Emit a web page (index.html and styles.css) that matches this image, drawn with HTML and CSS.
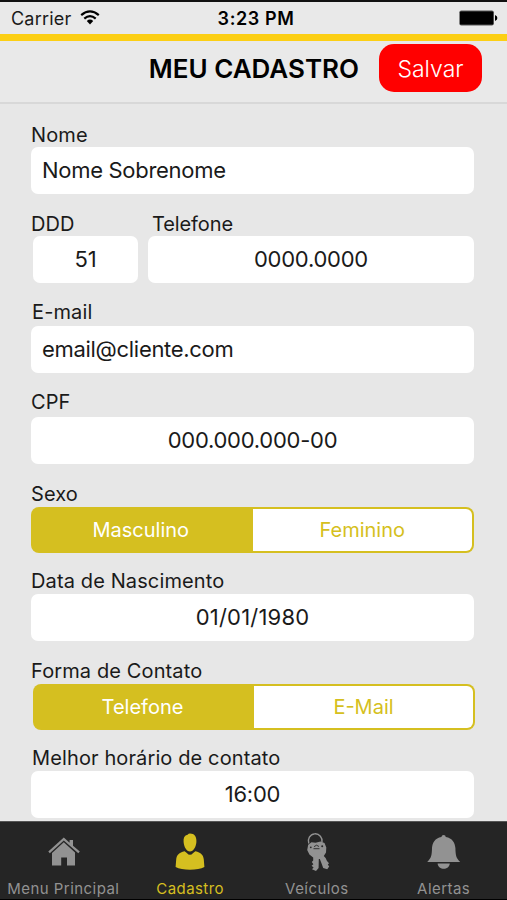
FILE: index.html
```
<!DOCTYPE html>
<html lang="pt-BR">
<head>
    <meta charset="UTF-8">
    <meta name="viewport" content="width=device-width, initial-scale=1.0">
    <title>Meu Cadastro</title>
    <link rel="stylesheet" href="styles.css">
</head>
<body>
    <div class="status-bar">
        <div class="carrier">
            <span>Carrier</span>
            <svg class="wifi" width="20" height="15" viewBox="0 0 20 15">
                <path d="M1.2 5.2 Q10 -2.4 18.8 5.2" fill="none" stroke="#000" stroke-width="2.2"/>
                <path d="M4.3 8.6 Q10 3.6 15.7 8.6" fill="none" stroke="#000" stroke-width="2.2"/>
                <path d="M6.8 11 Q10 8.2 13.2 11 L10 14.4 Z" fill="#000"/>
            </svg>
        </div>
        <div class="time">3:23 PM</div>
        <div class="battery">
            <svg width="39" height="16" viewBox="0 0 39 16">
                <rect x="0.3" y="0.6" width="34.6" height="14.8" rx="2" fill="#555"/>
                <rect x="1" y="1.4" width="33.2" height="13.2" rx="1.2" fill="#000"/>
                <path d="M36 5 Q38.4 6 38.4 8 Q38.4 10 36 11 Z" fill="#000"/>
            </svg>
        </div>
    </div>

    <header class="header">
        <h1 class="title">MEU CADASTRO</h1>
        <button class="save-btn">Salvar</button>
    </header>

    <main class="form">
        <div class="group">
            <label class="label">Nome</label>
            <div class="field text">Nome Sobrenome</div>
        </div>

        <div class="row">
            <div class="group ddd">
                <label class="label">DDD</label>
                <div class="field center">51</div>
            </div>
            <div class="group phone">
                <label class="label">Telefone</label>
                <div class="field center">0000.0000</div>
            </div>
        </div>

        <div class="group email">
            <label class="label">E-mail</label>
            <div class="field text">email@cliente.com</div>
        </div>

        <div class="group cpf">
            <label class="label">CPF</label>
            <div class="field center">000.000.000-00</div>
        </div>

        <div class="group gender">
            <label class="label">Sexo</label>
            <div class="segmented">
                <div class="segment active">Masculino</div>
                <div class="segment">Feminino</div>
            </div>
        </div>

        <div class="group birth">
            <label class="label">Data de Nascimento</label>
            <div class="field center date">01/01/1980</div>
        </div>

        <div class="group contact">
            <label class="label">Forma de Contato</label>
            <div class="segmented">
                <div class="segment active">Telefone</div>
                <div class="segment">E-Mail</div>
            </div>
        </div>

        <div class="group hour">
            <label class="label">Melhor horário de contato</label>
            <div class="field center">16:00</div>
        </div>
    </main>

    <nav class="tab-bar">
        <div class="tab">
            <svg class="tab-icon" width="40" height="40" viewBox="0 0 40 40" fill="#929292">
                <path d="M5.3 17.6 L20.8 3.4 L26.6 8.7 V6 H30 V11.8 L36.8 17.6 L35.3 19.2 L20.8 6.6 L6.8 19.2 Z"/>
                <path d="M9 19 L20.8 8.2 L32 18.6 V31.5 H24 V23.6 H18.2 V31.5 H9 Z"/>
            </svg>
            <span>Menu Principal</span>
        </div>
        <div class="tab selected">
            <svg class="tab-icon" width="40" height="40" viewBox="0 0 40 40" fill="#d5bf20">
                <path d="M20 -0.4 C24.5 -0.4 26.8 3 26.4 8 C26 13 23.5 17.4 20 17.4 C16.5 17.4 14 13 13.6 8 C13.2 4 14.5 1.5 17.6 0.8 C18.2 0 19 -0.4 20 -0.4 Z"/>
                <path d="M14.6 17.2 C16.5 18 17.6 20.8 20 20.8 C22.4 20.8 23.5 18 25.4 17.2 C31 18.6 33.4 21 33.8 25.5 L34.4 33 C28 36.6 12 36.6 5.6 33 L6.2 25.5 C6.6 21 9 18.6 14.6 17.2 Z"/>
            </svg>
            <span>Cadastro</span>
        </div>
        <div class="tab">
            <svg class="tab-icon" width="40" height="40" viewBox="0 0 40 40">
                <path d="M11.8 9.6 A6.9 7.2 0 1 1 25 8.4" fill="none" stroke="#929292" stroke-width="1.4"/>
                <path d="M11.2 10.8 L14.5 8.2 L18.5 8.8 L23.5 7.4 L27.5 9 L29.3 13.5 L29 18.5 L26.8 22 L28.6 24 L30 27 L32 29.2 L30.8 30.6 L32.2 32.6 L30.2 35.2 L26.2 34 L24.2 28.5 L22.8 25 L21.8 25 L21.6 34 L19 37 L15 35.2 L16.6 33.4 L14.6 31.8 L16.4 30.2 L14.8 28 L16.2 26.6 V23.6 L12.4 20.5 L10.2 16 Z" fill="#929292"/>
                <path d="M16.5 14.7 H22.5 M17 12.7 L19.5 11.2 L22 12.5" fill="none" stroke="#292929" stroke-width="0.9"/>
                <circle cx="13.8" cy="13.3" r="0.9" fill="#292929"/>
                <circle cx="25.2" cy="12.2" r="1" fill="#292929"/>
            </svg>
            <span>Veículos</span>
        </div>
        <div class="tab">
            <svg class="tab-icon" width="40" height="40" viewBox="0 0 40 40" fill="#929292">
                <path d="M17.4 3 Q17.6 1 19.6 1 Q21.6 1 21.8 3 C28.3 4 31 9 31.4 14 C31.6 21 32 24 36.2 28 H3.2 C7.4 24 7.8 21 8 14 C8.4 9 11 4 17.4 3 Z"/>
                <path d="M13.6 29.5 H25.8 C25.2 36.5 14.2 36.5 13.6 29.5 Z"/>
            </svg>
            <span>Alertas</span>
        </div>
    </nav>
</body>
</html>
```
FILE: styles.css
```
* {
    box-sizing: border-box;
}

body {
    margin: 0;
    height: 900px;
    display: flex;
    flex-direction: column;
    overflow: hidden;
    background-color: #e7e7e7;
    border-top: 2px solid #111;
    border-bottom: 1px solid #000;
    font-family: Inter, "Liberation Sans", sans-serif;
    color: #1a1a1a;
}

/* Barra de status */
.status-bar {
    flex: none;
    height: 32px;
    display: grid;
    grid-template-columns: 1fr auto 1fr;
    align-items: center;
    padding: 0 9px 0 11px;
    background-color: #e9e9e9;
    font-size: 18px;
    line-height: 33px;
}

.carrier {
    display: flex;
    align-items: center;
    gap: 9px;
    letter-spacing: 0.2px;
}

.wifi {
    margin-top: -2px;
}

.time {
    padding-left: 3px;
    font-weight: 600;
    letter-spacing: 0.6px;
    color: #000;
}

.battery {
    display: flex;
    justify-content: flex-end;
    margin-top: -1px;
}

/* Cabeçalho */
.header {
    flex: none;
    height: 70px;
    display: flex;
    align-items: flex-start;
    justify-content: flex-end;
    gap: 20px;
    padding: 3px 25px 0 0;
    border-top: 7px solid #fccf14;
    border-bottom: 2px solid #d8d8d8;
    background-color: #e9e9e9;
}

.title {
    margin: 0;
    font-size: 26px;
    font-weight: 600;
    line-height: 50px;
    color: #000;
}

.save-btn {
    width: 103px;
    height: 48px;
    padding: 1px 0 0;
    border: none;
    border-radius: 15px;
    background-color: #ff0000;
    color: #fff;
    font-family: inherit;
    font-size: 23px;
    font-weight: 300;
}

/* Formulário */
.form {
    flex: none;
    height: 717px;
    padding: 19px 33px 0 31px;
}

.group {
    display: flex;
    flex-direction: column;
}

.label {
    font-size: 20px;
    line-height: 24px;
    letter-spacing: 0.12px;
}

.field {
    height: 47px;
    padding: 0 11px;
    border-radius: 7px;
    background-color: #fff;
    font-size: 22px;
    line-height: 46px;
}

.text {
    letter-spacing: -0.3px;
}

.center {
    text-align: center;
    letter-spacing: -0.25px;
}

.date {
    letter-spacing: 0.2px;
}

.row {
    display: flex;
    gap: 10px;
    margin-top: 18px;
}

.ddd {
    width: 107px;
}

.ddd .field {
    margin-left: 2px;
}

.phone {
    flex: 1;
}

.phone .label {
    padding-left: 4px;
    letter-spacing: -0.1px;
}

.email,
.cpf {
    margin-top: 17px;
}

.email .label {
    padding-left: 1px;
    margin-bottom: 2px;
}

.cpf .label {
    margin-bottom: 3px;
}

.gender {
    margin-top: 18px;
}

.birth {
    margin-top: 16px;
}

.gender .label,
.birth .label,
.contact .label,
.hour .label {
    margin-bottom: 1px;
}

.contact {
    margin-top: 18px;
}

.contact .segmented {
    margin: 0 -1px 0 2px;
}

.hour {
    margin-top: 16px;
}

.hour .label {
    padding-left: 1px;
}

.segmented {
    display: flex;
    height: 46px;
    padding: 2px;
    border-radius: 8px;
    background-color: #d5bf20;
}

.segment {
    width: 50%;
    border-radius: 0 6px 6px 0;
    background-color: #fff;
    text-align: center;
    font-size: 20px;
    line-height: 43px;
    color: #d5bf20;
}

.segment.active {
    padding-right: 4px;
    border-radius: 0;
    background-color: transparent;
    color: #fff;
}

/* Barra inferior */
.tab-bar {
    flex: none;
    height: 78px;
    display: flex;
    background-color: #252525;
    border-top: 1px solid #555;
}

.tab {
    flex: 1;
    display: flex;
    flex-direction: column;
    align-items: center;
    padding-top: 12px;
    font-size: 15px;
    line-height: 20px;
    letter-spacing: 0.45px;
    color: #929292;
    white-space: nowrap;
}

.tab.selected {
    color: #d5bf20;
}

.tab-icon {
    display: block;
    margin-bottom: 5px;
    overflow: visible;
}
```
